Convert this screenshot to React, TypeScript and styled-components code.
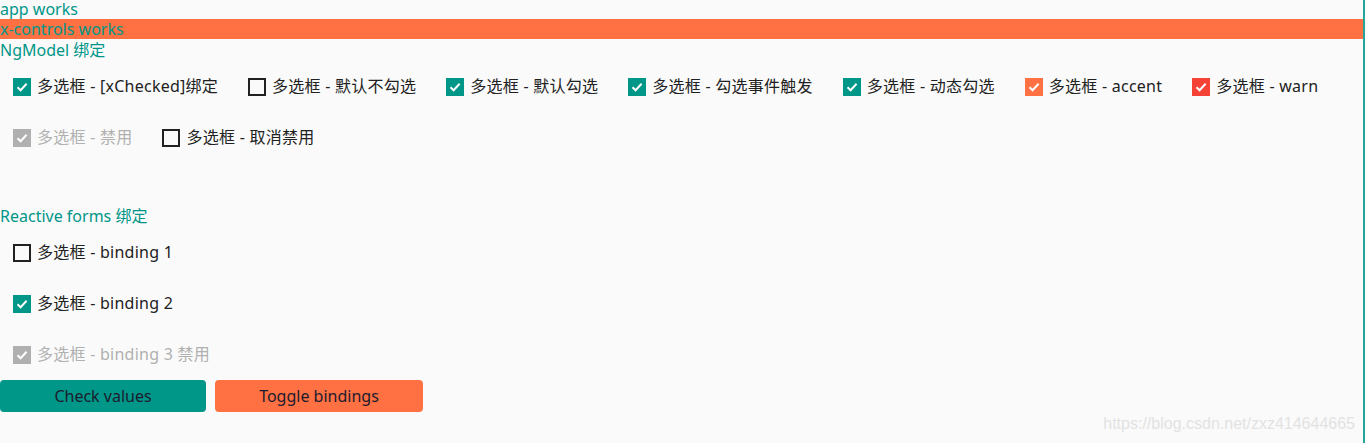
import React, { useState } from 'react'
import styled, { createGlobalStyle } from 'styled-components';

const GlobalStyle = createGlobalStyle`
body {
    margin: 0;
    background: #fafafa;
    font-family: "Noto Sans", "Noto Sans CJK SC", sans-serif;
    font-size: 16px;
    color: #212121;
}
`;

type Color = 'primary' | 'accent' | 'warn';

const palette: Record<Color, string> = {
    primary: '#009688',
    accent: '#ff7043',
    warn: '#f44336',
};

interface CheckboxProps {
    label: string;
    checked: boolean;
    color?: Color;
    disabled?: boolean;
    onChange?: (value: boolean) => void;
}

function Checkbox({ label, checked, color = 'primary', disabled, onChange }: CheckboxProps) {
    return (
        <Item disabled={disabled} onClick={() => !disabled && onChange && onChange(!checked)}>
            <Box checked={checked} disabled={disabled} fill={palette[color]}>
                {checked && (
                    <svg width="14" height="14" viewBox="0 0 14 14">
                        <polyline points="2.5,7.2 5.6,10.2 11.6,3.8" fill="none" stroke="#fff" strokeWidth="2" />
                    </svg>
                )}
            </Box>
            <Label>{label}</Label>
        </Item>
    );
}

export default function App() {
    const [checks, setChecks] = useState({
        xChecked: true,
        unchecked: false,
        defaultChecked: true,
        event: true,
        dynamic: true,
        accent: true,
        warn: true,
        cancelDisabled: false,
    });
    const [bindings, setBindings] = useState({ b1: false, b2: true, b3: true });
    const [bindingsOn, setBindingsOn] = useState(true);

    const set = (key: keyof typeof checks) => (value: boolean) => setChecks({ ...checks, [key]: value });

    return (
        <Page>
            <GlobalStyle />
            <Title size={19}>app works</Title>
            <Banner size={20}>x-controls works</Banner>
            <Title size={22}>NgModel 绑定</Title>
            <Row>
                <Checkbox label="多选框 - [xChecked]绑定" checked={checks.xChecked} onChange={set('xChecked')} />
                <Checkbox label="多选框 - 默认不勾选" checked={checks.unchecked} onChange={set('unchecked')} />
                <Checkbox label="多选框 - 默认勾选" checked={checks.defaultChecked} onChange={set('defaultChecked')} />
                <Checkbox label="多选框 - 勾选事件触发" checked={checks.event} onChange={set('event')} />
                <Checkbox label="多选框 - 动态勾选" checked={checks.dynamic} onChange={set('dynamic')} />
                <Checkbox label="多选框 - accent" color="accent" checked={checks.accent} onChange={set('accent')} />
                <Checkbox label="多选框 - warn" color="warn" checked={checks.warn} onChange={set('warn')} />
            </Row>
            <Row>
                <Checkbox label="多选框 - 禁用" checked disabled />
                <Checkbox label="多选框 - 取消禁用" checked={checks.cancelDisabled} onChange={set('cancelDisabled')} />
            </Row>
            <Section>
                <Title size={21}>Reactive forms 绑定</Title>
                <Column>
                    <Checkbox label="多选框 - binding 1" checked={bindings.b1} onChange={v => setBindings({ ...bindings, b1: v })} />
                    <Checkbox label="多选框 - binding 2" checked={bindings.b2} onChange={v => setBindings({ ...bindings, b2: v })} />
                    <Checkbox label="多选框 - binding 3 禁用" checked={bindings.b3} disabled />
                </Column>
                <Buttons>
                    <ActionButton tone="primary" width={206} onClick={() => console.log(bindings)}>Check values</ActionButton>
                    <ActionButton tone="accent" width={208} onClick={() => setBindingsOn(!bindingsOn)}>Toggle bindings</ActionButton>
                </Buttons>
            </Section>
            <Watermark>https://blog.csdn.net/zxz414644665</Watermark>
        </Page>
    );
}

const Page = styled.div`
position: relative;
height: 443px;
margin-right: 1px;
border-right: 2px solid #26a69a;
box-sizing: border-box;
`;

const Title = styled.div<{ size: number }>`
color: #009688;
height: ${({ size }) => size}px;
line-height: ${({ size }) => size}px;
`;

const Banner = styled(Title)`
background: #ff7043;
`;

const Row = styled.div`
display: flex;
gap: 30px;
padding-left: 13px;
`;

const Column = styled.div`
display: flex;
flex-direction: column;
align-items: flex-start;
padding-left: 13px;
`;

const Section = styled.section`
margin-top: 43px;
`;

interface ItemProps {
    disabled?: boolean;
}

const Item = styled.label<ItemProps>`
display: flex;
align-items: center;
height: 51px;
color: ${({ disabled }) => disabled ? '#b0b0b0' : '#212121'};
cursor: ${({ disabled }) => disabled ? 'default' : 'pointer'};
white-space: nowrap;
`;

interface BoxProps {
    checked: boolean;
    disabled?: boolean;
    fill: string;
}

const Box = styled.span<BoxProps>`
display: flex;
align-items: center;
justify-content: center;
width: 18px;
height: 18px;
box-sizing: border-box;
${({ checked, disabled, fill }) => checked
        ? `background: ${disabled ? '#b0b0b0' : fill};`
        : `border: 2px solid #212121;`}
`;

const Label = styled.span`
margin-left: 6px;
line-height: 21px;
letter-spacing: 0.25px;
`;

const Buttons = styled.div`
display: flex;
gap: 9px;
`;

const ActionButton = styled.button<{ tone: Color; width: number }>`
width: ${({ width }) => width}px;
height: 32px;
border: none;
border-radius: 4px;
background: ${({ tone }) => palette[tone]};
color: #1c1c2e;
font-family: inherit;
font-size: 16px;
padding: 0;
cursor: pointer;
`;

const Watermark = styled.div`
position: absolute;
right: 8px;
bottom: 10px;
color: #e2e2e2;
font-family: "Liberation Sans", sans-serif;
font-size: 16px;
`;
